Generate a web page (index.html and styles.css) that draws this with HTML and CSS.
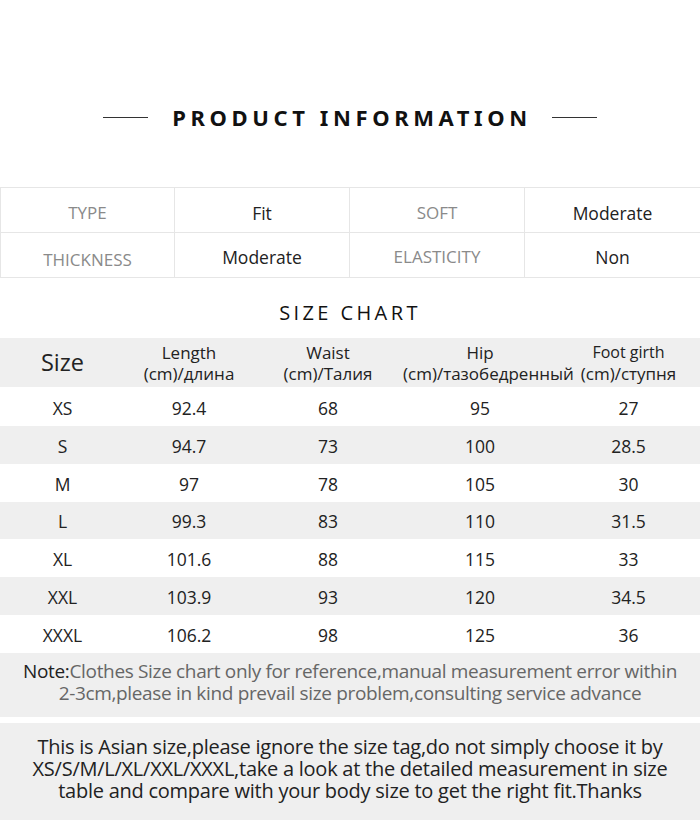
FILE: index.html
```html
<!DOCTYPE html>
<html>
<head>
<meta charset="utf-8">
<link rel="stylesheet" href="styles.css">
</head>
<body>
<div class="page">
  <div class="title-row">
    <span class="rule"></span>
    <h1 class="title">PRODUCT INFORMATION</h1>
    <span class="rule"></span>
  </div>

  <div class="info">
    <div class="cell label">TYPE</div>
    <div class="cell value">Fit</div>
    <div class="cell label">SOFT</div>
    <div class="cell value">Moderate</div>
    <div class="cell label low">THICKNESS</div>
    <div class="cell value">Moderate</div>
    <div class="cell label">ELASTICITY</div>
    <div class="cell value">Non</div>
  </div>

  <h2 class="subtitle">SIZE CHART</h2>

  <div class="chart">
    <div class="row head">
      <div class="c size-h">Size</div>
      <div class="c">Length<br>(cm)/длина</div>
      <div class="c">Waist<br>(cm)/Талия</div>
      <div class="c">Hip<br>(cm)/тазобедренный</div>
      <div class="c"><span class="foot">Foot girth</span><br>(cm)/ступня</div>
    </div>
    <div class="row first"><div class="c">XS</div><div class="c">92.4</div><div class="c">68</div><div class="c">95</div><div class="c">27</div></div>
    <div class="row alt"><div class="c">S</div><div class="c">94.7</div><div class="c">73</div><div class="c">100</div><div class="c">28.5</div></div>
    <div class="row"><div class="c">M</div><div class="c">97</div><div class="c">78</div><div class="c">105</div><div class="c">30</div></div>
    <div class="row alt"><div class="c">L</div><div class="c">99.3</div><div class="c">83</div><div class="c">110</div><div class="c">31.5</div></div>
    <div class="row"><div class="c">XL</div><div class="c">101.6</div><div class="c">88</div><div class="c">115</div><div class="c">33</div></div>
    <div class="row alt"><div class="c">XXL</div><div class="c">103.9</div><div class="c">93</div><div class="c">120</div><div class="c">34.5</div></div>
    <div class="row last"><div class="c">XXXL</div><div class="c">106.2</div><div class="c">98</div><div class="c">125</div><div class="c">36</div></div>
  </div>

  <div class="note">
    <p class="line"><span class="note-key">Note:</span>Clothes Size chart only for reference,manual measurement error within</p>
    <p class="line">2-3cm,please in kind prevail size problem,consulting service advance</p>
  </div>

  <div class="asian">
    <p class="line">This is Asian size,please ignore the size tag,do not simply choose it by</p>
    <p class="line">XS/S/M/L/XL/XXL/XXXL,take a look at the detailed measurement in size</p>
    <p class="line">table and compare with your body size to get the right fit.Thanks</p>
  </div>
</div>
</body>
</html>
```

FILE: styles.css
```css
* { box-sizing: border-box; }
html, body { margin: 0; padding: 0; background: #fff; }
body { font-family: "Open Sans", "Noto Sans", sans-serif; color: #222; }
.page { width: 700px; height: 838px; overflow: hidden; }

.title-row {
  display: flex;
  align-items: center;
  justify-content: center;
  height: 60px;
  margin-top: 87px;
}
.rule { display: block; width: 45px; height: 1px; background: #333; }
.title {
  margin: 0 20px 0 24px;
  font-family: "Noto Sans", sans-serif;
  font-weight: 700;
  font-size: 22px;
  letter-spacing: 4.6px;
  color: #111;
  line-height: 60px;
}

.info {
  margin-top: 40px;
  display: grid;
  grid-template-columns: 175px 175px 175px 175px;
  grid-template-rows: 45px 45px;
  border-top: 1px solid #e6e6e6;
}
.cell {
  display: flex;
  align-items: center;
  justify-content: center;
  padding-top: 5px;
  border-right: 1px solid #e6e6e6;
  border-bottom: 1px solid #e6e6e6;
  font-size: 17.5px;
}
.cell:nth-child(4n+1) { border-left: 1px solid #e6e6e6; }
.cell:nth-child(4n) { border-right: none; }
.label { color: #8a8a8a; font-size: 17px; }
.value { color: #222; }
.cell:nth-child(n+5) { padding-top: 3px; }
.cell.label.low { padding-top: 8px; }

.subtitle {
  margin: 0;
  height: 60px;
  line-height: 70px;
  text-align: center;
  font-weight: 400;
  font-size: 20px;
  letter-spacing: 3.4px;
  font-family: "Open Sans", sans-serif;
  color: #111;
}

.chart { display: flex; flex-direction: column; }
.row {
  display: grid;
  grid-template-columns: 125px 128px 150px 154px 143px;
  height: 37.8px;
  align-items: center;
  padding-top: 2px;
}
.row.head { height: 49px; background: #efefef; line-height: 21px; padding-top: 0; }
.row.first { height: 39px; }
.row.alt { background: #efefef; }
.c { text-align: center; font-size: 17.5px; color: #222; white-space: nowrap; }
.head .c { font-size: 17px; }
.head .size-h { font-size: 23.5px; }
.head .foot { font-size: 16px; }

.note {
  background: #efefef;
  height: 64px;
  padding-top: 7px;
}
.line {
  margin: 0;
  height: 22px;
  line-height: 22px;
  text-align: center;
  white-space: nowrap;
}
.note .line { font-size: 19px; letter-spacing: -0.34px; color: #666; }
.note-key { color: #222; }
.asian {
  margin-top: 6px;
  background: #efefef;
  height: 97px;
  padding-top: 13px;
}
.asian .line { color: #222; font-size: 20px; letter-spacing: -0.25px; }
```
